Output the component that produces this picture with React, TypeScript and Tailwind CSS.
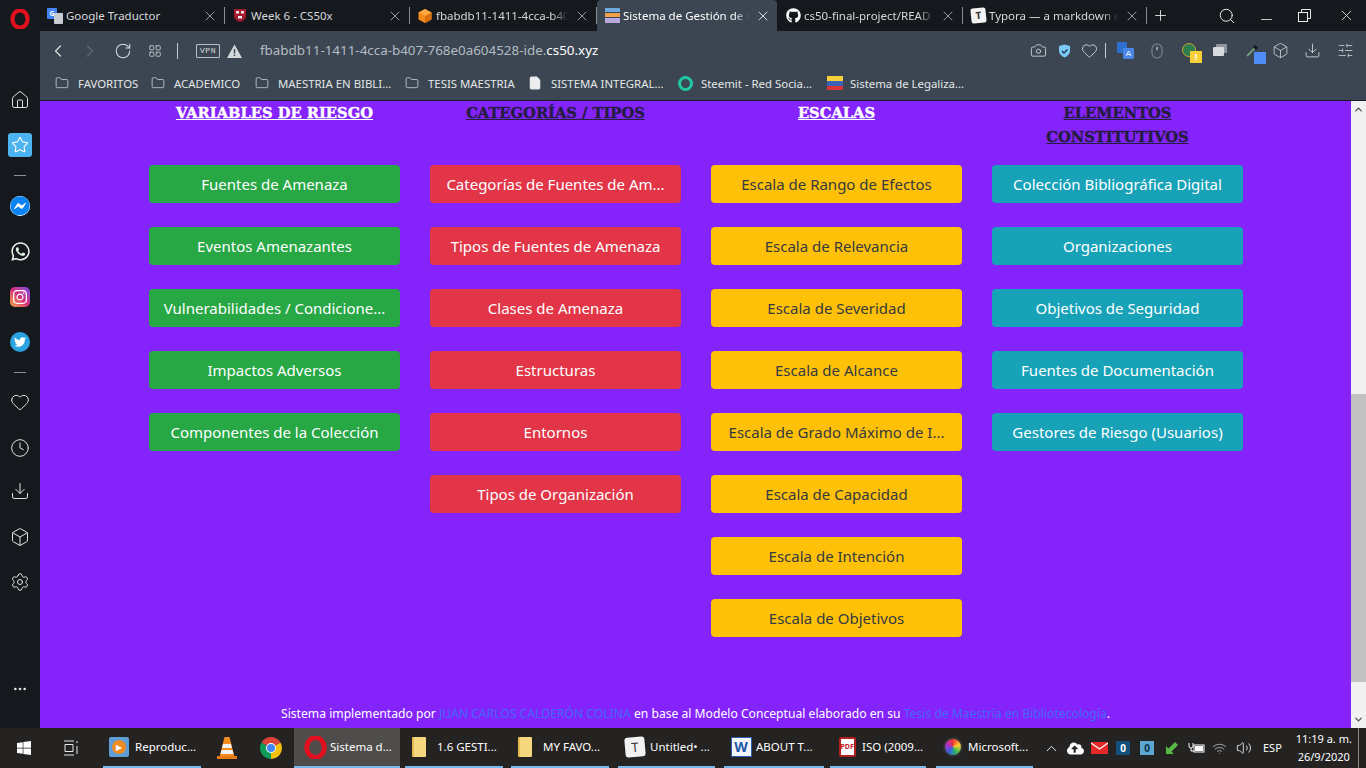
import type { ReactNode } from "react";
import {
  ChevronLeft,
  ChevronRight,
  ChevronUp,
  ChevronDown,
  RotateCw,
  LayoutGrid,
  Camera,
  Heart,
  Box,
  Download,
  SlidersHorizontal,
  X,
  Plus,
  Search,
  Minus,
  Folder,
  File,
  Home,
  Star,
  Clock,
  Settings,
  Ellipsis,
  Wifi,
  Volume2,
} from "lucide-react";
import { FaFacebookMessenger, FaWhatsapp, FaInstagram, FaTwitter, FaGithub, FaWindows, FaCloudUploadAlt } from "react-icons/fa";

const columns = [
  {
    title: ["VARIABLES DE RIESGO"],
    titleColor: "text-white",
    btn: "bg-[#28a745] text-white",
    items: ["Fuentes de Amenaza", "Eventos Amenazantes", "Vulnerabilidades / Condicione...", "Impactos Adversos", "Componentes de la Colección"],
  },
  {
    title: ["CATEGORÍAS / TIPOS"],
    titleColor: "text-[#251c42]",
    btn: "bg-[#e23648] text-white",
    items: ["Categorías de Fuentes de Am...", "Tipos de Fuentes de Amenaza", "Clases de Amenaza", "Estructuras", "Entornos", "Tipos de Organización"],
  },
  {
    title: ["ESCALAS"],
    titleColor: "text-white",
    btn: "bg-[#ffc107] text-[#343a40]",
    items: ["Escala de Rango de Efectos", "Escala de Relevancia", "Escala de Severidad", "Escala de Alcance", "Escala de Grado Máximo de I...", "Escala de Capacidad", "Escala de Intención", "Escala de Objetivos"],
  },
  {
    title: ["ELEMENTOS", "CONSTITUTIVOS"],
    titleColor: "text-[#251c42]",
    btn: "bg-[#17a2b8] text-white",
    items: ["Colección Bibliográfica Digital", "Organizaciones", "Objetivos de Seguridad", "Fuentes de Documentación", "Gestores de Riesgo (Usuarios)"],
  },
];

function OperaLogo({ size = 20 }: { size?: number }) {
  return (
    <svg width={size} height={size} viewBox="0 0 20 20">
      <ellipse cx="10" cy="10" rx="7.6" ry="8.6" fill="none" stroke="#e0101f" strokeWidth="4.2" />
    </svg>
  );
}

function Tab({ icon, label, active, fade, className }: { icon: ReactNode; label: string; active?: boolean; fade?: boolean; className: string }) {
  return (
    <div className={`flex items-center h-full pl-[7px] ${className} ${active ? "bg-[#3b4652] rounded-t-[4px]" : ""}`}>
      <div className="w-[16px] h-[16px] shrink-0 flex items-center justify-center">{icon}</div>
      <span
        className={`ml-[3px] flex-1 min-w-0 whitespace-nowrap text-[11.5px] ${active ? "text-white" : "text-[#d5d8db]"} ${fade ? "[mask-image:linear-gradient(to_right,black_88%,transparent)]" : ""}`}
      >
        {label}
      </span>
      <X size={16} strokeWidth={1.2} className={`mx-[6px] shrink-0 ${active ? "text-white" : "text-[#b9bdc1]"}`} />
      {!active && <div className="w-px h-[17px] bg-[#8b9095] shrink-0" />}
    </div>
  );
}

function TabBar() {
  return (
    <div className="h-[31px] flex items-center bg-[#15191e] shrink-0">
      <Tab
        className="w-[185px]"
        label="Google Traductor"
        icon={
          <div className="relative w-[16px] h-[16px]">
            <div className="w-[10px] h-[11px] bg-[#4285f4] rounded-[1px] text-white text-[7px] leading-[11px] text-center font-bold">G</div>
            <div className="absolute right-0 bottom-0 w-[9px] h-[11px] bg-[#c9ccd0] rounded-[1px]" />
          </div>
        }
      />
      <Tab
        className="w-[185px]"
        label="Week 6 - CS50x"
        icon={
          <svg width="14" height="15" viewBox="0 0 14 15">
            <path d="M1 1h12v7c0 3-3 5-6 6-3-1-6-3-6-6z" fill="#a51c30" />
            <rect x="3" y="3" width="3" height="2.5" fill="#eee" />
            <rect x="8" y="3" width="3" height="2.5" fill="#eee" />
            <rect x="5" y="8" width="4" height="2.5" fill="#eee" />
          </svg>
        }
      />
      <Tab
        className="w-[187px]"
        label="fbabdb11-1411-4cca-b40"
        fade
        icon={
          <svg width="16" height="16" viewBox="0 0 16 16">
            <path d="M8 1l6.5 3.5v7L8 15l-6.5-3.5v-7z" fill="#f58b1f" />
            <path d="M8 8l6.5-3.5v7L8 15z" fill="#d96f0c" />
            <path d="M8 1l6.5 3.5L8 8 1.500 4.500z" fill="#ffa63d" />
          </svg>
        }
      />
      <Tab
        active
        fade
        className="w-[180px]"
        label="Sistema de Gestión de R"
        icon={
          <div className="w-[15px] h-[15px] flex flex-col gap-px">
            <div className="h-[4px] bg-[#6fa8dc]" />
            <div className="h-[4px] bg-[#f0a04b]" />
            <div className="h-[5px] bg-[#b9a7e0]" />
          </div>
        }
      />
      <Tab className="w-[186px] pl-[8px]" label="cs50-final-project/READ" fade icon={<FaGithub size={15} className="text-white" />} />
      <Tab
        className="w-[184px]"
        label="Typora — a markdown e"
        fade
        icon={<div className="w-[15px] h-[15px] bg-[#f2f2f2] rounded-[2px] rotate-[-6deg] text-[#333] text-[10px] leading-[15px] text-center font-bold">T</div>}
      />
      <Plus size={17} strokeWidth={1.3} className="text-[#e0e2e4] ml-[5px]" />
      <div className="flex-1" />
      <Search size={18} strokeWidth={1.3} className="text-[#e8eaec] mr-[22px]" />
      <Minus size={17} strokeWidth={1.2} className="text-[#e8eaec] mr-[23px] mt-[8px]" />
      <svg width="13" height="13" viewBox="0 0 13 13" fill="none" stroke="#e8eaec" className="mr-[27px]">
        <rect x="0.5" y="3.500" width="9" height="9" />
        <path d="M3.500 3.500v-3h9v9h-3" />
      </svg>
      <X size={17} strokeWidth={1.2} className="text-[#e8eaec] mr-[11px]" />
    </div>
  );
}

function Toolbar() {
  return (
    <div className="h-[39px] flex items-center bg-[#3b4652] shrink-0 text-[#d8dbde]">
      <ChevronLeft size={20} strokeWidth={1.5} className="ml-[8px]" />
      <ChevronRight size={20} strokeWidth={1.5} className="ml-[12px] text-[#5f6a75]" />
      <RotateCw size={18} strokeWidth={1.4} className="ml-[14px]" />
      <LayoutGrid size={14} strokeWidth={1.3} className="ml-[16px]" />
      <div className="w-px h-[16px] bg-[#c5c9cd] ml-[15px]" />
      <div className="ml-[18px] w-[24px] h-[14px] border border-[#b9bec3] rounded-[1px] text-[8px] leading-[12px] text-center tracking-[0.5px] font-['Liberation_Mono',monospace]">VPN</div>
      <svg width="15" height="14" viewBox="0 0 15 14" className="ml-[7px]">
        <path d="M7.500 0.500L15 14H0z" fill="#d5d8db" />
        <path d="M7.500 5v4.500M7.500 10.500v1.500" stroke="#3b4652" strokeWidth="1.400" />
      </svg>
      <div className="ml-[18px] text-[13.4px] text-[#b4bbc2] whitespace-nowrap">
        fbabdb11-1411-4cca-b407-768e0a604528-ide.<span className="text-white">cs50.xyz</span>
      </div>
      <div className="flex-1" />
      <Camera size={17} strokeWidth={1.2} />
      <svg width="13" height="14" viewBox="0 0 13 14" className="ml-[11px]">
        <path d="M1 2l5.500-1.500L12 2v5c0 3-3 5.500-5.500 6.500C4 12.500 1 10 1 7z" fill="#7cc9f5" />
        <path d="M4 7l2 2 3.500-3.500" fill="none" stroke="#1f3b57" strokeWidth="1.500" />
      </svg>
      <Heart size={17} strokeWidth={1.2} className="ml-[10px]" />
      <div className="w-px h-[15px] bg-[#c5c9cd] ml-[7px]" />
      <svg width="17" height="17" viewBox="0 0 17 17" className="ml-[11px]">
        <rect x="0" y="0" width="10" height="11" rx="1" fill="#2f6fcf" />
        <rect x="6" y="6" width="11" height="11" rx="1" fill="#4a86e8" />
        <path d="M9 14l2.500-5 2.500 5M10 12.500h3" fill="none" stroke="#dfe9f8" strokeWidth="1" />
      </svg>
      <svg width="12" height="16" viewBox="0 0 12 16" className="ml-[17px]">
        <rect x="1" y="1" width="10" height="14" rx="5" fill="none" stroke="#6b7986" strokeWidth="1.400" />
        <rect x="5" y="3.500" width="2" height="4" rx="1" fill="#8f9aa5" />
      </svg>
      <div className="relative w-[16px] h-[16px] ml-[19px]">
        <div className="w-[14px] h-[14px] rounded-full bg-[#2f7d4f] border border-[#c9a72e]" />
        <div className="absolute -right-[4px] -bottom-[4px] w-[12px] h-[12px] bg-[#f7d038] text-[#fff] text-[9px] leading-[12px] text-center font-bold">!</div>
      </div>
      <svg width="14" height="13" viewBox="0 0 14 13" className="ml-[15px]">
        <rect x="3" y="0" width="11" height="9" rx="1" fill="#8f959b" />
        <rect x="0" y="3" width="11" height="9" rx="1" fill="#d8dadc" />
      </svg>
      <div className="relative w-[14px] h-[14px] ml-[19px]">
        <svg width="13" height="13" viewBox="0 0 13 13">
          <path d="M1 12L9 4" stroke="#6f9c7b" strokeWidth="2" />
          <path d="M8 2l3 3" stroke="#151515" strokeWidth="3" />
        </svg>
        <div className="absolute -right-[6px] -bottom-[6px] w-[12px] h-[12px] bg-[#4d8df5]" />
      </div>
      <Box size={17} strokeWidth={1.1} className="ml-[12px]" />
      <Download size={17} strokeWidth={1.2} className="ml-[15px]" />
      <SlidersHorizontal size={17} strokeWidth={1.1} className="ml-[16px] mr-[12px]" />
    </div>
  );
}

function Bookmark({ icon, label, className }: { icon: ReactNode; label: string; className: string }) {
  return (
    <div className={`flex items-center shrink-0 ${className}`}>
      <div className="w-[23px] flex items-center shrink-0">{icon}</div>
      <span className="text-[11.4px] text-[#e4e6e8] whitespace-nowrap">{label}</span>
    </div>
  );
}

function BookmarksBar() {
  const folder = <Folder size={14} strokeWidth={1.2} className="text-[#e4e6e8]" />;
  return (
    <div className="h-[31px] flex items-center bg-[#3b4652] border-b border-[#1c1a2b] shrink-0 pl-[15px] pb-[3px]">
      <Bookmark className="w-[96px]" icon={folder} label="FAVORITOS" />
      <Bookmark className="w-[104px]" icon={folder} label="ACADEMICO" />
      <Bookmark className="w-[150px]" icon={folder} label="MAESTRIA EN BIBLI..." />
      <Bookmark className="w-[123px]" icon={folder} label="TESIS MAESTRIA" />
      <Bookmark className="w-[150px]" icon={<File size={14} className="fill-[#eceef0] text-[#eceef0]" />} label="SISTEMA INTEGRAL..." />
      <Bookmark
        className="w-[149px]"
        icon={<div className="w-[15px] h-[15px] rounded-full border-[3px] border-[#1fc8a5]" />}
        label="Steemit - Red Socia..."
      />
      <Bookmark
        className="w-[150px]"
        icon={
          <div className="w-[16px] h-[14px] flex flex-col">
            <div className="h-[5px] bg-[#f4d13d]" />
            <div className="h-[5px] bg-[#3c62b8]" />
            <div className="h-[4px] bg-[#d9343a]" />
          </div>
        }
        label="Sistema de Legaliza..."
      />
    </div>
  );
}

function Sidebar() {
  const iconCls = "text-[#dfe1e3]";
  return (
    <aside className="w-[40px] bg-[#15191e] shrink-0 flex flex-col items-center">
      <div className="mt-[9px]">
        <OperaLogo />
      </div>
      <Home size={20} strokeWidth={1.2} className={`mt-[61px] ${iconCls}`} />
      <div className="mt-[23px] w-[24px] h-[24px] rounded-[3px] bg-[#4db3ee] flex items-center justify-center">
        <Star size={18} strokeWidth={1.4} className="text-white" />
      </div>
      <div className="mt-[18px] w-[12px] h-px bg-[#8b9095]" />
      <div className="mt-[20px] w-[20px] h-[20px] rounded-full bg-[#0a84f5] flex items-center justify-center">
        <FaFacebookMessenger size={20} className="text-[#0a84f5] bg-white rounded-full" />
      </div>
      <FaWhatsapp size={21} className="mt-[25px] text-[#e8f5ea]" />
      <div className="mt-[25px] w-[20px] h-[20px] rounded-[5px] bg-gradient-to-tr from-[#f5a623] via-[#d62976] to-[#7c3aed] flex items-center justify-center">
        <FaInstagram size={16} className="text-white" />
      </div>
      <div className="mt-[25px] w-[20px] h-[20px] rounded-full bg-[#2aa1e0] flex items-center justify-center">
        <FaTwitter size={12} className="text-white" />
      </div>
      <div className="mt-[20px] w-[12px] h-px bg-[#8b9095]" />
      <Heart size={20} strokeWidth={1.2} className={`mt-[19px] ${iconCls}`} />
      <Clock size={20} strokeWidth={1.2} className={`mt-[26px] ${iconCls}`} />
      <Download size={20} strokeWidth={1.2} className={`mt-[23px] ${iconCls}`} />
      <Box size={20} strokeWidth={1.2} className={`mt-[26px] ${iconCls}`} />
      <Settings size={20} strokeWidth={1.2} className={`mt-[25px] ${iconCls}`} />
      <Ellipsis size={16} strokeWidth={2} className={`mt-[89px] ${iconCls}`} />
    </aside>
  );
}

function Scrollbar() {
  return (
    <div className="w-[15px] bg-[#f1f1f1] shrink-0 flex flex-col items-center">
      <ChevronUp size={11} strokeWidth={3} className="text-[#505050] mt-[3px]" />
      <div className="h-[279px]" />
      <div className="w-full h-[288px] bg-[#c1c1c1]" />
      <div className="flex-1" />
      <ChevronDown size={11} strokeWidth={3} className="text-[#505050] mb-[3px]" />
    </div>
  );
}

function Content() {
  return (
    <main className="flex-1 bg-[#8424fb] flex flex-col font-['Noto_Sans',sans-serif]">
      <div className="flex gap-[30px] pl-[109px]">
        {columns.map((col) => (
          <div key={col.title[0]} className="w-[251px] shrink-0">
            <div className={`h-[64px] text-center text-[14.7px] leading-[24px] font-bold underline font-['DejaVu_Serif',serif] [-webkit-text-stroke:0.4px_currentColor] ${col.titleColor}`}>
              {col.title.map((line) => (
                <div key={line}>{line}</div>
              ))}
            </div>
            <div className="flex flex-col gap-[24px]">
              {col.items.map((item) => (
                <div key={item} className={`h-[38px] rounded-[4px] flex items-center justify-center text-[15px] whitespace-nowrap ${col.btn}`}>
                  {item}
                </div>
              ))}
            </div>
          </div>
        ))}
      </div>
      <div className="flex-1" />
      <p className="h-[26px] text-center text-[12.15px] leading-[24px] text-white">
        Sistema implementado por <span className="text-[#3f6af8]">JUAN CARLOS CALDERÓN COLINA</span> en base al Modelo Conceptual elaborado en su{" "}
        <span className="text-[#3f6af8]">Tesis de Maestría en Bibliotecología</span>.
      </p>
    </main>
  );
}

function TaskItem({ icon, label, active, className }: { icon: ReactNode; label: string; active?: boolean; className: string }) {
  return (
    <div className={`h-full flex items-center shrink-0 pl-[5px] border-b-2 border-[#76b9ed] ${active ? "bg-[#4f4d4c] pl-[9px]" : ""} ${className}`}>
      <div className="w-[24px] flex justify-center shrink-0">{icon}</div>
      <span className="ml-[3px] text-[11.5px] text-white whitespace-nowrap">{label}</span>
    </div>
  );
}

function FileFolderIcon() {
  return <div className="w-[14px] h-[20px] mr-[6px] bg-[#f4d77e] rounded-[1px] border-l-2 border-[#e5bb4f]" />;
}

function Taskbar() {
  return (
    <footer className="h-[40px] bg-[#252322] flex items-center shrink-0 font-['Noto_Sans',sans-serif]">
      <FaWindows size={16} className="ml-[16px] text-white shrink-0" />
      <svg width="16" height="16" viewBox="0 0 16 16" className="ml-[31px] shrink-0" fill="none" stroke="#e8e8e8">
        <path d="M1 1h10M1 15h10M2 4.500h8v7H2zM14 1v2M14 6v8" />
      </svg>
      <TaskItem
        className="w-[98px] ml-[24px]"
        label="Reproduc..."
        icon={
          <div className="w-[20px] h-[20px] mr-[3px] bg-[#5e9ed6] rounded-[2px] flex items-center justify-center">
            <div className="w-[14px] h-[14px] rounded-full bg-[#f08a24] text-white text-[8px] leading-[14px] text-center">▶</div>
          </div>
        }
      />
      <svg width="20" height="24" viewBox="0 0 20 24" className="ml-[16px] shrink-0">
        <path d="M7.500 1h5l5 20H2.500z" fill="#f48b1e" />
        <path d="M6 8h8l1 4H5zM4.500 14h11l1 4h-13z" fill="#f2f2f2" />
        <rect x="0" y="20" width="20" height="3" fill="#e77d12" />
      </svg>
      <svg width="22" height="22" viewBox="0 0 22 22" className="ml-[23px] shrink-0">
        <path d="M11 11L1.500 5.500A11 11 0 0 1 20.500 5.500z" fill="#db4437" />
        <path d="M11 11l9.500-5.500A11 11 0 0 1 11 22z" fill="#f4c20d" />
        <path d="M11 11v11A11 11 0 0 1 1.500 5.500z" fill="#0f9d58" />
        <circle cx="11" cy="11" r="5" fill="#fff" />
        <circle cx="11" cy="11" r="4" fill="#4285f4" />
      </svg>
      <TaskItem active className="w-[106px] ml-[12px]" label="Sistema d..." icon={<OperaLogo size={23} />} />
      <TaskItem className="w-[98px] ml-[5px]" label="1.6 GESTI..." icon={<FileFolderIcon />} />
      <TaskItem className="w-[98px] ml-[8px]" label="MY FAVO..." icon={<FileFolderIcon />} />
      <TaskItem
        className="w-[97px] ml-[9px]"
        label="Untitled• ..."
        icon={<div className="w-[20px] h-[20px] bg-[#f2f2f2] rounded-[3px] rotate-[-5deg] text-[#333] text-[13px] leading-[20px] text-center">T</div>}
      />
      <TaskItem
        className="w-[100px] ml-[9px]"
        label="ABOUT T..."
        icon={<div className="w-[21px] h-[20px] bg-[#f2f5fb] border border-[#2b5faf] text-[#1f56a8] text-[14px] leading-[18px] text-center font-bold">W</div>}
      />
      <TaskItem
        className="w-[96px] ml-[6px]"
        label="ISO (2009..."
        icon={
          <div className="w-[17px] h-[20px] bg-white border-2 border-[#b3201f] rounded-[2px] text-[#c8201f] text-[7px] leading-[16px] text-center font-bold">PDF</div>
        }
      />
      <TaskItem
        className="w-[97px] ml-[10px]"
        label="Microsoft..."
        icon={<div className="w-[20px] h-[20px] rounded-full bg-[conic-gradient(#e33,#fc3,#3b5,#36d,#a3c,#e33)] border-2 border-[#333]" />}
      />
      <ChevronUp size={17} strokeWidth={1.3} className="ml-[10px] text-white shrink-0" />
      <FaCloudUploadAlt size={17} className="ml-[7px] text-white shrink-0" />
      <svg width="17" height="12" viewBox="0 0 17 12" className="ml-[7px] shrink-0">
        <rect width="17" height="12" fill="#e32929" />
        <path d="M0 1l8.500 6L17 1" fill="none" stroke="#fff" strokeWidth="1.300" />
      </svg>
      <div className="ml-[8px] w-[14px] h-[14px] bg-[#12507a] text-white text-[10px] leading-[14px] text-center font-bold shrink-0">0</div>
      <div className="ml-[10px] w-[14px] h-[14px] bg-[#5aa7cf] text-[#10324a] text-[10px] leading-[14px] text-center font-bold shrink-0">0</div>
      <svg width="16" height="16" viewBox="0 0 16 16" className="ml-[10px] shrink-0">
        <path d="M2 14V6l2.500 2.500L11 2l3 3-6.500 6.500L10 14z" fill="#58b947" />
      </svg>
      <svg width="17" height="12" viewBox="0 0 17 12" className="ml-[8px] shrink-0" fill="none" stroke="#fff">
        <rect x="6" y="3" width="10" height="7" />
        <rect x="7.500" y="4.500" width="7" height="4" fill="#fff" />
        <path d="M1 1v3a2 2 0 0 0 4 0V1M3 6v3h3" />
      </svg>
      <Wifi size={15} strokeWidth={1.2} className="ml-[7px] text-[#c9c9c9] shrink-0" />
      <Volume2 size={16} strokeWidth={1.2} className="ml-[9px] text-white shrink-0" />
      <span className="ml-[11px] text-[11px] text-white shrink-0">ESP</span>
      <div className="ml-[12px] w-[60px] text-center text-[11px] leading-[18px] text-white shrink-0">
        <div>11:19 a. m.</div>
        <div>26/9/2020</div>
      </div>
      <div className="ml-[4px] w-px h-full bg-[#8a8988] shrink-0" />
    </footer>
  );
}

export default function App() {
  return (
    <div className="w-[1366px] h-[768px] overflow-hidden flex flex-col font-['Noto_Sans',sans-serif]">
      <div className="flex-1 flex min-h-0">
        <Sidebar />
        <div className="flex-1 flex flex-col min-w-0">
          <TabBar />
          <Toolbar />
          <BookmarksBar />
          <div className="flex-1 flex min-h-0">
            <Content />
            <Scrollbar />
          </div>
        </div>
      </div>
      <Taskbar />
    </div>
  );
}
